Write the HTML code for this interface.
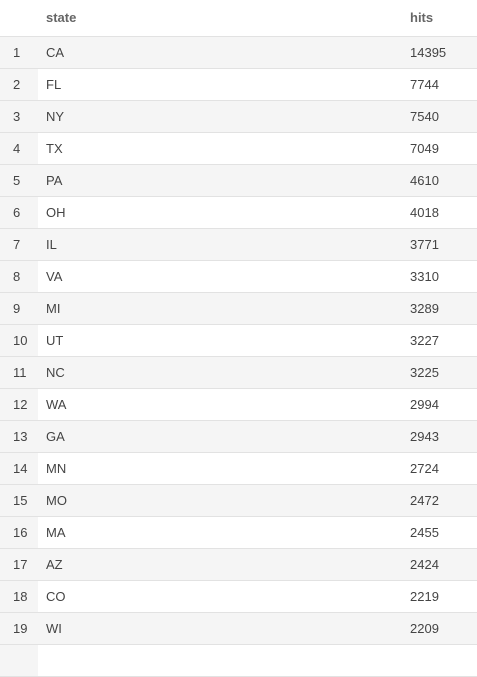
<!DOCTYPE html>
<html><head><style>
body{margin:0;background:#fff;font-family:"Liberation Sans",sans-serif;font-size:13px;color:#444;width:477px;height:651px;overflow:hidden}
.r{position:relative;height:31px;border-bottom:1px solid #e2e2e2;}
.h{height:36px;border-bottom:1px solid #e2e2e2;font-weight:bold;color:#666}
.r span{position:absolute;top:0;line-height:32px}
.h span{line-height:35px}
.o{background:#f5f5f5}
.e .i{background:#f5f5f5}
.i{left:0;width:38px;height:31px}
.i b{font-weight:normal;position:absolute;left:13px}
.s{left:46px}.n{left:410px}
</style></head><body>
<div class="r h"><span class="s">state</span><span class="n">hits</span></div>
<div id="t"></div>
<script>
var d=[["CA",14395],["FL",7744],["NY",7540],["TX",7049],["PA",4610],["OH",4018],["IL",3771],["VA",3310],["MI",3289],["UT",3227],["NC",3225],["WA",2994],["GA",2943],["MN",2724],["MO",2472],["MA",2455],["AZ",2424],["CO",2219],["WI",2209],["",""]];
var h="";d.forEach(function(x,k){h+='<div class="r '+(k%2?'e':'o')+'"><span class="i"><b>'+(x[0]?k+1:'')+'</b></span><span class="s">'+x[0]+'</span><span class="n">'+x[1]+'</span></div>';});
document.getElementById("t").innerHTML=h;
</script>
</body></html>
